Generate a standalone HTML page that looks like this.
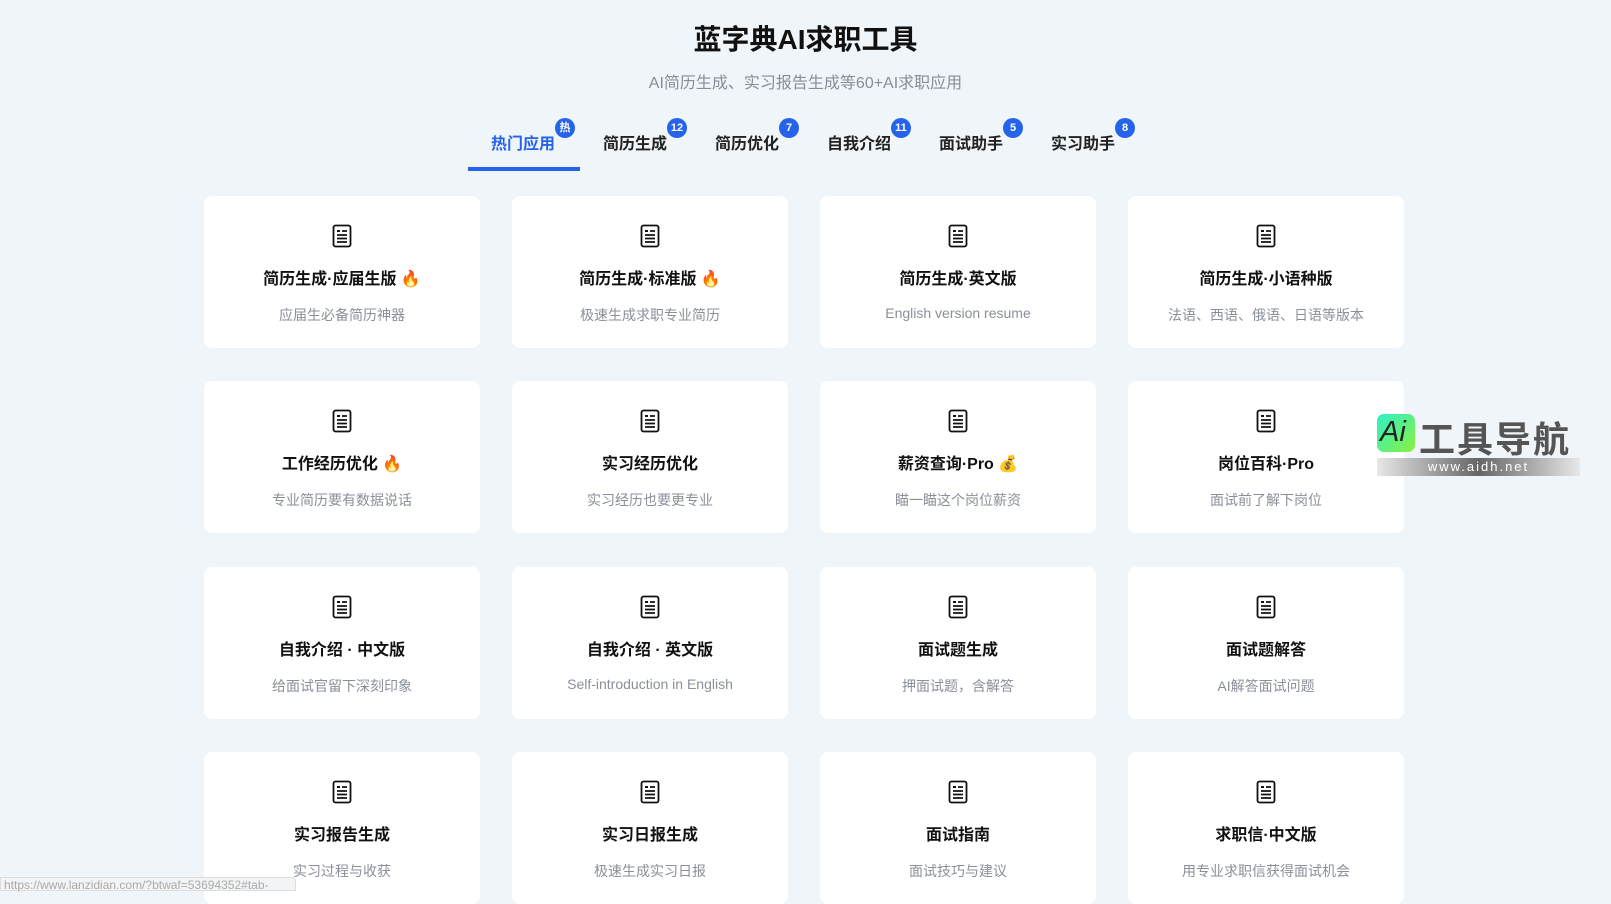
<!DOCTYPE html>
<html><head><meta charset="utf-8"><style>
*{margin:0;padding:0;box-sizing:border-box}
body{width:1611px;height:891px;overflow:hidden;background:#eff5f9;font-family:"Liberation Sans","Noto Sans CJK SC",sans-serif;position:relative}
h1{position:absolute;top:18px;left:0;width:1611px;text-align:center;font-size:28px;font-weight:700;color:#111}
.sub{position:absolute;top:69px;left:0;width:1611px;text-align:center;font-size:16px;color:#888d96}
.tab{position:absolute;top:130px;width:112px;text-align:center;font-size:16px;font-weight:700;color:#222}
.tab.act{color:#2563eb}
.b{position:absolute;top:-12px;height:20px;min-width:20px;border-radius:10px;background:#2563eb;color:#fff;font-size:11px;line-height:20px;text-align:center;padding:0 3px}
.ul{position:absolute;left:468px;top:167px;width:112px;height:4px;background:#2563eb}
.card{position:absolute;width:276px;height:152px;background:#fff;border-radius:8px;text-align:center}
.card svg{position:absolute;left:128px;top:28px}
.t{position:absolute;top:69px;width:100%;font-size:16px;font-weight:700;color:#111}
.d{position:absolute;top:109px;width:100%;font-size:14px;color:#8a8f99}
.wm{position:absolute;left:1377px;top:414px;width:203px;height:62px}
.status{position:absolute;left:0;top:877px;width:296px;height:14px;background:#f3f4f6;border:1px solid #ddd;font-size:12px;color:#aaa;line-height:14px;padding-left:3px;border-radius:0 4px 0 0}
</style></head><body>
<h1>蓝字典AI求职工具</h1>
<div class="sub">AI简历生成、实习报告生成等60+AI求职应用</div>
<div class="tab act" style="left:467px">热门应用<span class="b" style="left:88px">热</span></div>
<div class="tab" style="left:579px">简历生成<span class="b" style="left:88px">12</span></div>
<div class="tab" style="left:691px">简历优化<span class="b" style="left:88px">7</span></div>
<div class="tab" style="left:803px">自我介绍<span class="b" style="left:88px">11</span></div>
<div class="tab" style="left:915px">面试助手<span class="b" style="left:88px">5</span></div>
<div class="tab" style="left:1027px">实习助手<span class="b" style="left:88px">8</span></div>
<div class="ul"></div>
<div id="g"></div>
<div class="wm">
<div style="position:absolute;left:0;top:0;width:38px;height:38px;border-radius:7px;background:linear-gradient(135deg,#2ef0c8,#8af040)"></div>
<div style="position:absolute;left:3px;top:2px;font-size:29px;font-style:italic;color:#222">Ai</div>
<div style="position:absolute;left:42px;top:-3px;font-size:36px;font-weight:700;color:#555;letter-spacing:2px">工具导航</div>
<div style="position:absolute;left:0;top:44px;width:203px;height:18px;background:linear-gradient(90deg,#e8e8e8,#666 50%,#e8e8e8);color:#fff;font-size:13px;line-height:18px;text-align:center;letter-spacing:2px">www.aidh.net</div>
</div>
<div class="status">https://www.lanzidian.com/?btwaf=53694352#tab-</div>
<script>
var d=[["简历生成·应届生版 🔥","应届生必备简历神器"],["简历生成·标准版 🔥","极速生成求职专业简历"],["简历生成·英文版","English version resume"],["简历生成·小语种版","法语、西语、俄语、日语等版本"],
["工作经历优化 🔥","专业简历要有数据说话"],["实习经历优化","实习经历也要更专业"],["薪资查询·Pro 💰","瞄一瞄这个岗位薪资"],["岗位百科·Pro","面试前了解下岗位"],
["自我介绍 · 中文版","给面试官留下深刻印象"],["自我介绍 · 英文版","Self-introduction in English"],["面试题生成","押面试题，含解答"],["面试题解答","AI解答面试问题"],
["实习报告生成","实习过程与收获"],["实习日报生成","极速生成实习日报"],["面试指南","面试技巧与建议"],["求职信·中文版","用专业求职信获得面试机会"]];
var h="",xs=[204,512,820,1128],ys=[196,381,567,752];
var ic='<svg width="20" height="24" viewBox="0 0 20 24" fill="none" stroke="#111" stroke-width="1.8"><rect x="1.5" y="1.5" width="17" height="21" rx="2"/><rect x="5" y="6" width="3" height="2" fill="#111" stroke="none"/><path d="M10 7h5M5 11h10M5 14.5h10M5 18h10"/></svg>';
d.forEach(function(c,i){h+='<div class="card" style="left:'+xs[i%4]+'px;top:'+ys[i>>2]+'px">'+ic+'<div class="t">'+c[0]+'</div><div class="d">'+c[1]+'</div></div>'});
document.getElementById("g").innerHTML=h;
</script>
</body></html>
